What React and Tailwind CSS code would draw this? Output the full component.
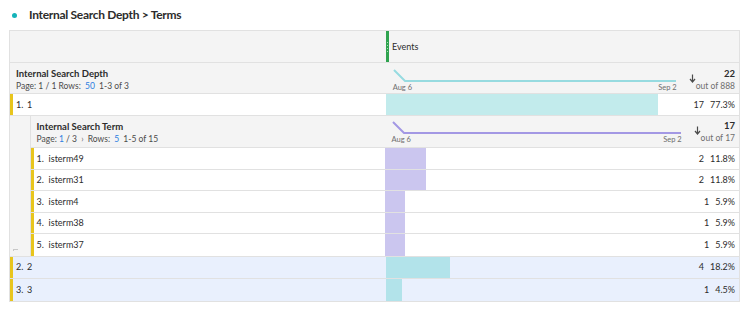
import React from "react";

const font = { fontFamily: "Lato, 'Liberation Sans', sans-serif" };

const topRows = [
  { label: "1", value: 17, pct: "77.3%", bar: 272, blue: false },
  { label: "2", value: 4, pct: "18.2%", bar: 64, blue: true },
  { label: "3", value: 1, pct: "4.5%", bar: 16, blue: true },
];

const terms = [
  { label: "isterm49", value: 2, pct: "11.8%", bar: 41 },
  { label: "isterm31", value: 2, pct: "11.8%", bar: 41 },
  { label: "isterm4", value: 1, pct: "5.9%", bar: 20 },
  { label: "isterm38", value: 1, pct: "5.9%", bar: 20 },
  { label: "isterm37", value: 1, pct: "5.9%", bar: 20 },
];

function Spark({ color, width }) {
  return (
    <div className="flex flex-col shrink-0" style={{ width }}>
      <svg width={width} height="15" className="block">
        <polyline
          points={`1,2 12,13 ${width - 1},13`}
          fill="none"
          stroke={color}
          strokeWidth="2"
        />
      </svg>
      <div className="flex justify-between text-[7.5px] leading-[10px] text-[#6e6e6e] whitespace-nowrap">
        <span>Aug 6</span>
        <span>Sep 2</span>
      </div>
    </div>
  );
}

function Total({ value, of }) {
  return (
    <div className="flex-1 flex items-start pl-[12px]">
      <svg width="7" height="9" className="mt-[6px] shrink-0">
        <path d="M3.5 0.5 V7.5 M1 5 L3.5 8 L6 5" fill="none" stroke="#4b4b4b" strokeWidth="1.2" />
      </svg>
      <div className="ml-auto flex flex-col items-end leading-[12px] whitespace-nowrap">
        <span className="text-[9.5px] font-bold text-[#2c2c2c]">{value}</span>
        <span className="text-[8.5px] text-[#6e6e6e]">out of {of}</span>
      </div>
    </div>
  );
}

function Values({ r }) {
  return (
    <div className="ml-auto flex items-center pr-[4px] text-[9px] text-[#2c2c2c] whitespace-nowrap">
      <span className="mr-[6px]">{r.value}</span>
      <span>{r.pct}</span>
    </div>
  );
}

function TopRow({ r, last }) {
  const bg = r.blue ? "bg-[#e9f0fd]" : "bg-white";
  return (
    <div className={`flex h-[22px] ${last ? "" : "border-b border-[#e1e1e1]"} ${bg}`}>
      <div className="w-[376px] flex items-center border-l-[3px] border-[#e8c51d] pl-[3px] text-[9px] text-[#2c2c2c]">
        <span className="w-[11px]">{r.label}.</span>
        <span>{r.label}</span>
      </div>
      <div className="flex-1 flex items-stretch">
        <div className={r.blue ? "bg-[#b2e3ea]" : "bg-[#c2ebec]"} style={{ width: r.bar }} />
        <Values r={r} />
      </div>
    </div>
  );
}

function TermRow({ r, i, last }) {
  return (
    <div className={`flex h-[21.5px] bg-white ${last ? "" : "border-b border-[#e1e1e1]"}`}>
      <div className="w-[354px] flex items-center border-l-[3px] border-[#e8c51d] pl-[3px] text-[9px] text-[#2c2c2c]">
        <span className="w-[12px]">{i + 1}.</span>
        <span>{r.label}</span>
      </div>
      <div className="flex-1 flex items-stretch">
        <div className="bg-[#cbc6ef]" style={{ width: r.bar }} />
        <Values r={r} />
      </div>
    </div>
  );
}

export default function App() {
  return (
    <div className="w-[750px] h-[309px] bg-white overflow-hidden" style={font}>
      <div className="h-[30px] flex items-center pl-[12px]">
        <div className="w-[5px] h-[5px] rounded-full bg-[#14b3b9]" />
        <h1 className="ml-[12px] text-[12px] font-bold tracking-[-0.3px] text-[#2c2c2c]">
          Internal Search Depth &gt; Terms
        </h1>
      </div>

      <div className="ml-[9px] w-[731px] border border-[#e1e1e1]">
        {/* header */}
        <div className="flex h-[32px] bg-[#f4f4f4] border-b border-[#e1e1e1]">
          <div className="w-[376px]" />
          <div className="flex-1 flex">
            <div className="w-[3px] bg-[#2fa34f] flex flex-col justify-center gap-[2px] items-center">
              <div className="w-[1px] h-[1px] bg-[#a8dcb5]" />
              <div className="w-[1px] h-[1px] bg-[#a8dcb5]" />
              <div className="w-[1px] h-[1px] bg-[#a8dcb5]" />
              <div className="w-[1px] h-[1px] bg-[#a8dcb5]" />
            </div>
            <div className="flex items-center pl-[3px] text-[9px] text-[#2c2c2c]">Events</div>
          </div>
        </div>

        {/* summary */}
        <div className="flex h-[31px] bg-[#f4f4f4] border-b border-[#e1e1e1]">
          <div className="w-[376px] pl-[6px] pt-[5px] leading-[12px]">
            <div className="text-[9.5px] font-bold text-[#2c2c2c]">Internal Search Depth</div>
            <div className="text-[8.5px] text-[#4b4b4b]">
              Page: 1 / 1 Rows: <span className="text-[#2d7ee0] mx-[2px]">50</span> 1-3 of 3
            </div>
          </div>
          <div className="flex-1 flex items-start pl-[7px] pt-[5px] pr-[4px]">
            <Spark color="#97dbe0" width={284} />
            <Total value="22" of="888" />
          </div>
        </div>

        <TopRow r={topRows[0]} />

        {/* nested breakdown */}
        <div className="flex bg-[#f4f4f4] border-b border-[#e1e1e1]">
          <div className="w-[22px] relative">
            <div className="absolute left-[3px] bottom-[5px] w-[5px] h-[2px] border-t border-l border-[#c8c8c8]" />
          </div>
          <div className="flex-1 flex flex-col border-l border-[#e1e1e1]">
            <div className="flex h-[32px] bg-[#f4f4f4] border-b border-[#e1e1e1]">
              <div className="w-[354px] pl-[6px] pt-[5px] leading-[12px]">
                <div className="text-[9.5px] font-bold text-[#2c2c2c]">Internal Search Term</div>
                <div className="text-[8.5px] text-[#4b4b4b]">
                  Page: <span className="text-[#2d7ee0]">1</span> / 3{" "}
                  <span className="text-[#6e6e6e] mx-[2px]">›</span> Rows:{" "}
                  <span className="text-[#2d7ee0] mx-[2px]">5</span> 1-5 of 15
                </div>
              </div>
              <div className="flex-1 flex items-start pl-[7px] pt-[4px] pr-[4px]">
                <Spark color="#a398e4" width={290} />
                <Total value="17" of="17" />
              </div>
            </div>
            {terms.map((r, i) => (
              <TermRow key={r.label} r={r} i={i} last={i === terms.length - 1} />
            ))}
          </div>
        </div>

        <TopRow r={topRows[1]} />
        <TopRow r={topRows[2]} last />
      </div>
    </div>
  );
}
